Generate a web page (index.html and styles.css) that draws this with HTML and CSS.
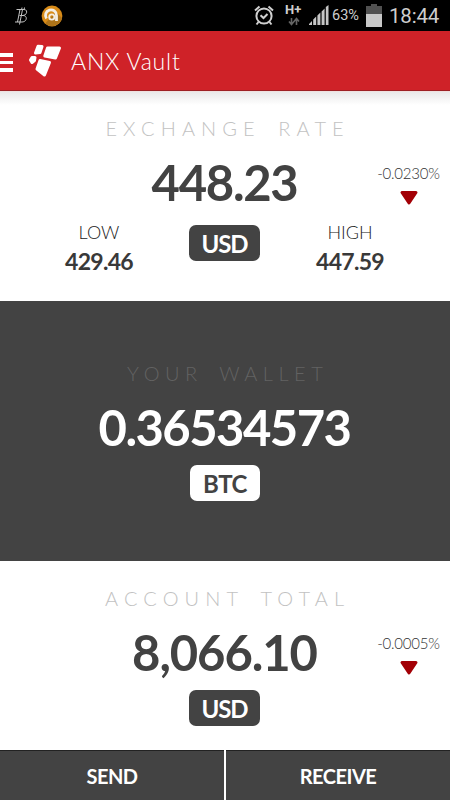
FILE: index.html
```html
<!DOCTYPE html>
<html lang="en">
<head>
<meta charset="utf-8">
<title>ANX Vault</title>
<link rel="stylesheet" href="styles.css">
</head>
<body>
<div class="status">
  <svg class="bit" width="16" height="20" viewBox="0 0 16 20" fill="none" stroke="#c4c4c4" stroke-width="1"><path d="M2.500 3.500H10c4 0 3.500 5.500-1 6h-3.500M9 9.500c5 0 4 6.500-1 6.500H1M6 3.500 3.500 16M8.500 3.500 6 16M8 1.500l-.4 2M6 16l-.5 2.500M10.500 1.500l-.4 2"/></svg>
  <svg class="coin" width="22" height="22" viewBox="0 0 22 22"><circle cx="11" cy="11" r="10.400" fill="#d88b18"/><path d="M4 18.500A10.400 10.400 0 0 0 21 13L15 7z" fill="#ad7319"/><path d="M5.500 13.500A5.500 5.500 0 1 1 15.500 10.500V16" fill="none" stroke="#f3eee5" stroke-width="2.800"/><circle cx="10.800" cy="12" r="2.600" fill="none" stroke="#f3eee5" stroke-width="1.800"/></svg>
  <span class="grow"></span>
  <svg class="alarm" width="20" height="21" viewBox="0 0 20 21" fill="none" stroke="#d0d0d0" stroke-width="2"><circle cx="10" cy="11" r="7.600"/><path d="M6.500 10.200 9.500 13l4-4M1 5.500 5.500 1.500M19 5.500l-4.500-4M4.500 17l-2 2.500M15.500 17l2 2.500"/></svg>
  <div class="net"><span>H+</span><svg width="12" height="9" viewBox="0 0 12 9" fill="none" stroke="#656565" stroke-width="1.600"><path d="M3.500 1v6M1 4.500l2.500 3 2.500-3M8.500 8V2M6 4.500l2.500-3 2.500 3"/></svg></div>
  <svg class="signal" width="20" height="21" viewBox="0 0 20 21" fill="#c6c6c6"><path d="M0 20v-1l3-3v4zM4.200 20v-5.500l3-3V20zM8.400 20v-9.500l3-3V20zM12.600 20V6.500l3-3V20zM16.800 20V2l2.700-2v20z"/></svg>
  <span class="pct">63%</span>
  <svg class="batt" width="16" height="23" viewBox="0 0 16 23"><path d="M0 2h5V0h6v2h5v9H0z" fill="#515151"/><path d="M0 10h16v13H0z" fill="#c8c8c8"/></svg>
  <span class="clock">18:44</span>
</div>
<header class="bar">
  <div class="burger"><i></i><i></i><i></i></div>
  <svg class="logo" width="34" height="34" viewBox="0 0 34 34" fill="#fff" stroke="#fff" stroke-width="3" stroke-linejoin="round"><path d="M10 2.200 14 2.500 12 8.500 7.500 9z"/><path d="M19.500 4 31.500 4 27.500 14 16.800 12z"/><path d="M2.500 16 4 13.500 7 13.500 6.500 16.500 4 18.500z"/><path d="M12 16.500 21.500 18.500 16.500 31 9 25z"/></svg>
  <span class="name">ANX Vault</span>
</header>
<main>
  <section class="panel rate">
    <h2>EXCHANGE RATE</h2>
    <div class="big">448.23</div>
    <div class="trio">
      <div class="side low"><span>LOW</span><b>429.46</b></div>
      <div class="pill">USD</div>
      <div class="side high"><span>HIGH</span><b>447.59</b></div>
    </div>
    <div class="change"><span>-0.0230%</span><svg width="20" height="16" viewBox="0 0 20 16"><path d="M3 2.500h14L10 13z" fill="#a30006" stroke="#a30006" stroke-width="3" stroke-linejoin="round"/></svg></div>
  </section>
  <section class="panel wallet">
    <h2>YOUR WALLET</h2>
    <div class="big">0.36534573</div>
    <div class="pill light">BTC</div>
  </section>
  <section class="panel total">
    <h2>ACCOUNT TOTAL</h2>
    <div class="big">8,066.10</div>
    <div class="pill">USD</div>
    <div class="change"><span>-0.0005%</span><svg width="20" height="16" viewBox="0 0 20 16"><path d="M3 2.500h14L10 13z" fill="#a30006" stroke="#a30006" stroke-width="3" stroke-linejoin="round"/></svg></div>
  </section>
</main>
<footer class="actions"><div class="send">SEND</div><div class="receive">RECEIVE</div></footer>
</body>
</html>
```
FILE: styles.css
```css
* { box-sizing: border-box; }
body { margin: 0; width: 450px; height: 800px; overflow: hidden; background: #fff; color: #424242; font-family: Lato, "Liberation Sans", sans-serif; white-space: nowrap; }
svg { display: block; flex: none; }
.status { height: 31px; background: #000; display: flex; align-items: flex-start; color: #cecece; font-family: Roboto, sans-serif; }
.bit { margin: 6px 0 0 14px; }
.coin { margin: 5px 0 0 11px; }
.grow { flex: 1; }
.alarm { margin: 5px 11px 0 0; }
.net { width: 17px; margin: 4px 7px 0 0; font-size: 13px; line-height: 12px; font-weight: 700; }
.net svg { margin: 1px 0 0 3px; }
.signal { margin: 5px 3px 0 0; }
.pct { width: 28px; font-size: 14.500px; line-height: 20px; margin: 6px 6px 0 0; }
.batt { margin: 4px 7px 0 0; }
.clock { width: 61px; font-size: 20.500px; line-height: 24px; margin-top: 4px; letter-spacing: -.2px; }
.bar { height: 60px; background: #cf2228; border-bottom: 1px solid #9e2024; display: flex; align-items: flex-start; color: #fff; }
.burger { width: 13px; margin-top: 22px; display: grid; gap: 4px; }
.burger i { height: 3.500px; background: #fff; }
.logo { margin: 13px 0 0 15px; }
.name { font-size: 23px; line-height: 28px; font-weight: 300; letter-spacing: .8px; margin: 16px 0 0 9px; }
.panel { position: relative; display: flex; flex-direction: column; align-items: center; }
.rate { height: 210px; padding-top: 25px; background: linear-gradient(#f6d9d7 0, #e9e9e9 1px, #eee 4px, #fff 14px); }
.wallet { height: 260px; padding-top: 60px; background: #434343; color: #fff; }
.total { height: 189px; padding-top: 25px; }
h2 { margin: 0 -5.200px 12px 0; font-size: 20px; line-height: 24px; font-weight: 300; color: #c2c2c2; letter-spacing: 6.100px; word-spacing: 6px; }
.wallet h2 { color: #626262; letter-spacing: 5.500px; }
.big { font-size: 49px; line-height: 60px; height: 73px; font-weight: 700; letter-spacing: -1.300px; margin-right: 1px; }
.pill { width: 71px; height: 36px; border-radius: 7px; background: #434343; color: #fff; font-size: 24px; line-height: 38px; font-weight: 700; text-align: center; letter-spacing: -1px; }
.wallet .big { height: 68px; letter-spacing: -1.550px; }
.total .big { height: 68px; letter-spacing: -1.100px; }
.total .pill { margin-right: 1px; }
.wallet .light { background: #fff; color: #434343; width: 70px; letter-spacing: -.5px; }
.trio { width: 450px; display: grid; grid-template-columns: 189px 71px 190px; }
.side { display: flex; flex-direction: column; align-items: center; margin-top: -3px; color: #222; }
.low { padding-left: 9px; }
.high { padding-right: 10px; }
.side span { font-size: 18px; line-height: 20px; font-weight: 300; }
.side b { font-size: 23px; line-height: 26px; margin-top: 6px; color: #393939; letter-spacing: -.7px; }
.change { position: absolute; right: 10px; top: 73px; color: #333; font-size: 15px; line-height: 18px; font-weight: 300; width: 63px; letter-spacing: -.2px; display: flex; flex-direction: column; align-items: center; }
.change svg { margin-top: 8px; }
.actions { height: 50px; display: grid; grid-template-columns: 224px 224px; gap: 2px; }
.actions div { background: #434343; border-top: 1px solid #222; color: #fff; font-size: 20px; line-height: 51px; font-weight: 700; text-align: center; letter-spacing: -.5px; }
```
